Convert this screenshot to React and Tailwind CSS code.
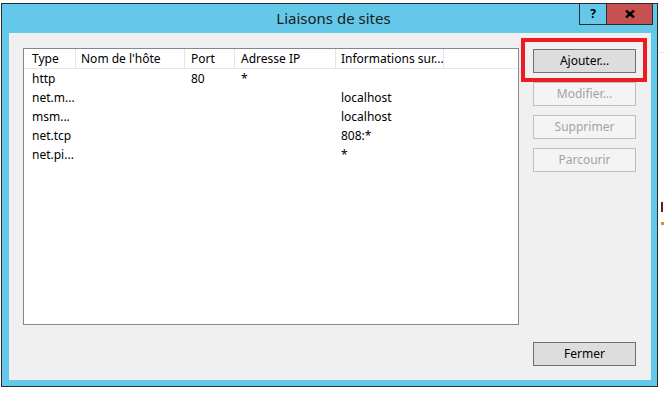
const columns = [
  { label: "Type", cls: "w-[52px] pl-[8px]" },
  { label: "Nom de l'hôte", cls: "w-[109px] pl-[5px]" },
  { label: "Port", cls: "w-[50px] pl-[6px]" },
  { label: "Adresse IP", cls: "w-[101px] pl-[6px]" },
  { label: "Informations sur...", cls: "w-[108px] pl-[5px]" },
];

const rows = [
  ["http", "", "80", "*", ""],
  ["net.m...", "", "", "", "localhost"],
  ["msm...", "", "", "", "localhost"],
  ["net.tcp", "", "", "", "808:*"],
  ["net.pi...", "", "", "", "*"],
];

function DialogButton({ children, disabled }) {
  return (
    <button
      className={
        disabled
          ? "w-[103px] h-[24px] border border-[#bfbfbf] bg-[#f4f4f4] text-[#a3a3a3] text-[12px] leading-[22px]"
          : "w-[103px] h-[24px] border border-[#707070] bg-[#dddddd] text-black text-[12px] leading-[22px]"
      }
    >
      {children}
    </button>
  );
}

export default function App() {
  return (
    <div
      className="relative w-[665px] h-[396px] bg-white overflow-hidden pt-[3px] pl-[1px]"
      style={{ fontFamily: '"Noto Sans", "Open Sans", sans-serif' }}
    >
      {/* bits of the page behind the dialog */}
      <div className="absolute left-[659px] top-[52px] w-[6px] h-[1px] bg-[#dfe9f3]" />
      <div className="absolute left-[661px] top-[202px] w-[2px] h-[10px] bg-[#6b1a2a]" />
      <div className="absolute left-[661px] top-[222px] w-[3px] h-[3px] bg-[#d98a3a]" />

      <div className="w-[657px] h-[384px] border border-[#2b2b2b] bg-[#63c8e9] flex flex-col">
        {/* title bar */}
        <div className="relative h-[29px] shrink-0 flex items-center justify-center pl-[8px]">
          <span className="text-[15px] text-[#1a1a1a] leading-none">Liaisons de sites</span>
          <div className="absolute right-[4px] top-0 flex h-[21px] border-l border-r border-b border-[#2b2b2b]">
            <div className="w-[27px] h-full flex items-center justify-center border-r border-[#2b2b2b] text-[12px] font-bold text-black leading-none">
              ?
            </div>
            <div className="w-[45px] h-full bg-[#c75050] flex items-center justify-center">
              <svg width="10" height="8" viewBox="0 0 10 8">
                <path d="M1 0.5 L9 7.5 M9 0.5 L1 7.5" stroke="#000" strokeWidth="2.4" />
              </svg>
            </div>
          </div>
        </div>

        {/* client area */}
        <div className="ml-[7px] w-[642px] h-[347px] bg-[#f0f0f0] flex flex-col text-[12px] text-black">
          <div className="flex pl-[14px] pt-[15px]">
            <div className="w-[496px] h-[277px] border border-[#828790] bg-white">
              <div className="flex h-[20px] border-b border-[#e5e5e5]">
                {columns.map((c) => (
                  <div key={c.label} className={`${c.cls} h-full border-r border-[#e5e5e5] leading-[19px] whitespace-nowrap overflow-hidden`}>
                    {c.label}
                  </div>
                ))}
              </div>
              {rows.map((r, i) => (
                <div key={i} className="flex h-[19px]">
                  {r.map((cell, j) => (
                    <div key={j} className={`${columns[j].cls} leading-[19px] whitespace-nowrap`}>
                      {cell}
                    </div>
                  ))}
                </div>
              ))}
            </div>

            <div className="ml-[14px] mt-[1px] flex flex-col gap-[9px]">
              <div className="relative">
                <DialogButton>Ajouter...</DialogButton>
                <div className="absolute left-[-12px] top-[-11px] w-[126px] h-[44px] border-[4px] border-[#ed1c24]" />
              </div>
              <DialogButton disabled>Modifier...</DialogButton>
              <DialogButton disabled>Supprimer</DialogButton>
              <DialogButton disabled>Parcourir</DialogButton>
            </div>
          </div>

          <div className="mt-auto flex justify-end pr-[15px] pb-[14px]">
            <DialogButton>Fermer</DialogButton>
          </div>
        </div>
      </div>
    </div>
  );
}
